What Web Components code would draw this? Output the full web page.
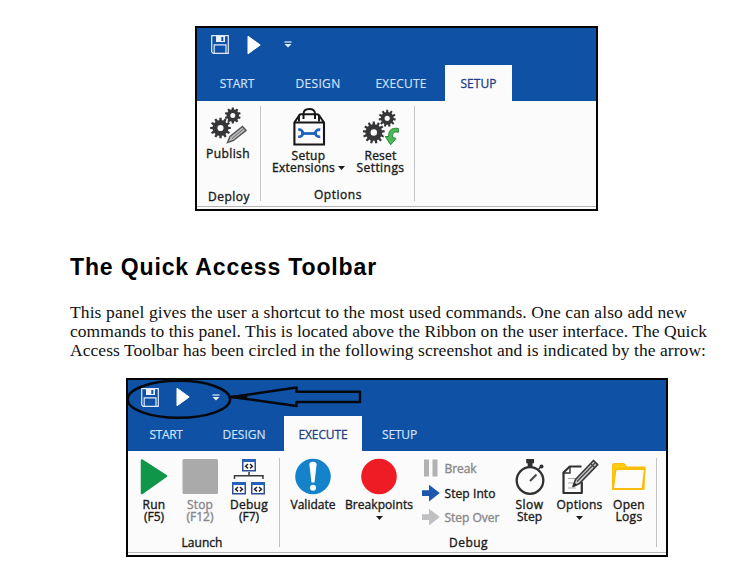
<!DOCTYPE html>
<html lang="en"><head><meta charset="utf-8"><title>The Quick Access Toolbar</title>
<style>
html,body{margin:0;background:#fff}
body{width:753px;height:570px;overflow:hidden}
</style></head><body>
<doc-page></doc-page>
<script>
function gear(cx,cy,r,ri,hole,n){
  let p='';
  const pt=(a,q)=>(cx+q*Math.cos(a)).toFixed(2)+' '+(cy+q*Math.sin(a)).toFixed(2);
  for(let i=0;i<n;i++){
    const a=i*2*Math.PI/n-Math.PI/2,s=Math.PI/n;
    p+=(i?'L':'M')+pt(a-s*.62,ri)+'L'+pt(a-s*.4,r)+'L'+pt(a+s*.4,r)+'L'+pt(a+s*.62,ri);
  }
  p+=`ZM${cx-hole} ${cy}a${hole} ${hole} 0 1 0 ${2*hole} 0a${hole} ${hole} 0 1 0 ${-2*hole} 0Z`;
  return `<path d="${p}" fill="#363639" fill-rule="evenodd"/>`;
}
const win=(x,y)=>`<rect x="${x+.75}" y="${y+.75}" width="12.5" height="11" fill="#fff" stroke="#2c4f94" stroke-width="1.5"/><path d="M${x} ${y+1.5}h14" stroke="#2462b8" stroke-width="3"/><path d="M${x+6} ${y+5}l-2.4 2.2 2.4 2.2M${x+8} ${y+5}l2.4 2.2-2.4 2.2" fill="none" stroke="#222" stroke-width="1.5"/>`;
const ICONS={
 save:[18,19,`<path d="M.7.7h16.6v17.6H2.2L.7 16.8Z" fill="none" stroke="#dfe9fa" stroke-width="1.2"/><path d="M5 1h9v6H5Z" fill="#e9f1fd"/><path d="M10.300 2h2v4h-2Z" fill="#0f52a5"/><path d="M3.200 18V9.800h11.800V18" fill="none" stroke="#dfe9fa" stroke-width="1.200"/>`],
 play:[14,20,`<path d="M1 1.200 13.200 10 1 18.800Z" fill="#fff" stroke="#fff" stroke-linejoin="round"/>`],
 more:[8,7,`<path d="M.5 1h7" stroke="#e6eefb" stroke-width="1.200"/><path d="M.5 3h7L4 6.500Z" fill="#e6eefb"/>`],
 publish:[40,40,gear(24.8,9.5,8,6.2,2.5,10)+gear(12.5,22,10.4,7.9,3.1,12)+`<path d="m19.500 36.500 2.500-6L34.500 20.500l3.600 3.900L25.500 34.500Z" fill="#bbb" stroke="#fbfbfb" stroke-width="3"/><path d="m19.500 36.500 2.500-6L34.500 20.500l3.600 3.900L25.500 34.500Z" fill="#b9b9bb" stroke="#555" stroke-width="1.400"/><path d="m24 32.500 12-10M19.500 36.500l2-1" stroke="#707074"/>`],
 bag:[40,40,`<path d="M10 15.500V10.500Q10 8.500 12 8.300H28Q30 8.500 30 10.500V15.500" fill="none" stroke="#171717" stroke-width="1.900"/><path d="M14.500 13V8Q14.500 3 20.300 3T26 8v5" fill="none" stroke="#171717" stroke-width="2"/><path d="M10.500 9 5.400 16.500V38.500H35V16.500L29.800 9" fill="none" stroke="#171717" stroke-width="2.100"/><path d="M5 16.500H35" stroke="#171717" stroke-width="2"/><path d="M12 27.500H28" stroke="#2163ba" stroke-width="2.800"/><path d="M9.200 23.800c6-1.200 6.500 7.600 0 6.900M31.200 23.800c-6.400-1.200-6.400 7.800 0 6.900" fill="none" stroke="#2163ba" stroke-width="2.700"/>`],
 reset:[40,40,gear(26.2,12.3,8.6,6.4,2.6,11)+gear(12.8,26.5,11,8.3,3.2,13)+`<path d="M37.300 22.400C29.500 21.500 27.500 25 27.700 30.500H24.300L29.700 38.800 35 32.500 31.700 31.400C31 27 33.400 25.200 37.300 26.300Z" fill="#3cae4c" stroke="#fbfbfb" stroke-width="2.500"/><path d="M37.300 22.400C29.500 21.500 27.500 25 27.700 30.500H24.300L29.700 38.800 35 32.500 31.700 31.400C31 27 33.400 25.200 37.300 26.300Z" fill="#4bb955" stroke="#278739"/>`],
 run:[40,40,`<path d="M8 4.500 32 20 8 37Z" fill="#109648" stroke="#109648" stroke-width="2.500" stroke-linejoin="round"/>`],
 stop:[40,40,`<rect x="2.500" y="3" width="35.500" height="35" rx="1.500" fill="#aaa"/>`],
 debug:[40,40,win(13,3)+win(3,26)+win(22,26)+`<path d="M20 16v4M5.500 23v-3.300h28.500V23" fill="none" stroke="#3a3a3a" stroke-width="1.500"/>`],
 validate:[40,40,`<circle cx="20" cy="20.500" r="17.800" fill="#1583cc"/><path d="M16.400 8.500Q16.500 5.800 20 5.800T23.600 8.500L21.500 26.500H18.500Z" fill="#fff"/><circle cx="20" cy="31.700" r="3" fill="#fff"/>`],
 breakpoints:[40,40,`<circle cx="20" cy="20.500" r="17.800" fill="#ee1c24"/>`],
 slow:[40,40,`<circle cx="20" cy="24.500" r="13.300" fill="none" stroke="#303032" stroke-width="2.300"/><path d="M16.200 3h7.800v4.200h-1.500V12h-4.800V7.200h-1.500Z" fill="#303032"/><path d="m28.500 13.300 3-3" stroke="#303032" stroke-width="1.500"/><circle cx="31.500" cy="10.500" r="2" fill="#303032"/><path d="m20 25 6.500-6.500" stroke="#444" stroke-width="2"/>`],
 edit:[40,40,`<path d="M21.500 10.500H9.800L3.500 16.500V37H21.800V26" fill="none" stroke="#303032" stroke-width="2.200" stroke-linejoin="round"/><path d="M3.500 17H10V10.500" fill="none" stroke="#303032" stroke-width="1.400"/><path d="M8 22.500h9M8 27h5M8 32h8" stroke="#aaa" stroke-width="1.200"/><path d="m13 30.500 2.500-7L33.500 4.500l4.200 4.100L19.500 27.500Z" fill="#c8c8ca" stroke="#3a3a3c" stroke-width="1.700" stroke-linejoin="round"/><path d="m17 25.500 18.500-19M30.500 7.500l4 4" stroke="#444" stroke-width="1.200"/><path d="m13 30.500 1.500-4 2.500 2.500Z" fill="#222"/>`],
 folder:[40,40,`<path d="M4 33V9.500Q4 8 5.500 8H14.500L17.500 11.500H35.500L34.500 33Z" fill="#fbfbfb" stroke="#f9bd0b" stroke-width="2" stroke-linejoin="round"/><path d="M4 33V9.500Q4 8 5.500 8H14.500L17.500 12.500 8 16Z" fill="#fbce14"/><path d="M4 33 6.500 14.500Q6.800 13 8.500 13H35.800L33.500 33Z" fill="#fdfcfb" stroke="#f9bd0b" stroke-width="1.800" stroke-linejoin="round"/>`],
 pause:[18,18,`<path d="M2 .5h5v17H2ZM10.500.5h5v17h-5Z" fill="#b2b2b4"/>`],
 into:[18,18,`<path d="M0 6.300H7V.8L17.800 9 7 17.500V12H0Z" fill="#1e58ae"/>`],
 over:[18,18,`<path d="M0 6.300H7V.8L17.800 9 7 17.500V12H0Z" fill="#c0c0c2"/>`],
 caret:[7,4,`<path d="M0 0h7L3.500 4Z" fill="#1c1c1c"/>`]
};
function define(name,html,setup){
  const t=document.createElement('template');t.innerHTML=html;
  customElements.define(name,class extends HTMLElement{
    constructor(){super();this.attachShadow({mode:'open'}).append(document.importNode(t.content,true));}
    connectedCallback(){if(setup)setup(this,this.shadowRoot);}
  });
}
const setWidth=el=>{el.style.width=el.getAttribute('w')+'px'};

define('ui-icon','<style>:host{display:block;flex:none}svg{display:block}</style><div></div>',(el,r)=>{
  const [w,h,s]=ICONS[el.getAttribute('name')];
  r.querySelector('div').innerHTML=`<svg width="${w}" height="${h}" viewBox="0 0 ${w} ${h}">${s}</svg>`;
});

/* One line of text, tracked so that it fills the given width. */
define('fit-text','<style>:host{display:block;white-space:nowrap;flex:none}span{display:inline-block}</style><span></span>',(el,r)=>{
  const s=r.querySelector('span'),txt=el.getAttribute('text'),w=+el.getAttribute('w');
  s.textContent=txt;s.style.letterSpacing='0';setWidth(el);
  s.style.letterSpacing=((w-s.getBoundingClientRect().width)/txt.length)+'px';
});

define('ribbon-tab',`<style>:host{display:flex;justify-content:center;box-sizing:border-box;padding-top:var(--tab-pad);color:#d5e3fa;flex:none;-webkit-text-stroke:.15px currentColor}
:host([active]){background:#fbfbfc;color:#243f86;-webkit-text-stroke:.3px #243f86}</style><slot></slot>`,setWidth);

define('ribbon-command',`<style>:host{display:flex;flex-direction:column;align-items:center;flex:none}
:host([disabled]){color:#89878b}
.l{display:flex;flex-direction:column;align-items:center;padding-top:var(--label-gap,3px)}</style>
<slot name="icon"></slot><div class="l"><slot></slot></div>`,setWidth);

define('ribbon-row',`<style>:host{display:flex;align-items:center;height:24.5px;gap:4.5px}
:host([disabled]){color:#89878b}::slotted(fit-text){padding-top:2px}</style><slot></slot>`);

define('ribbon-group',`<style>:host{display:flex;flex-direction:column;box-sizing:border-box;height:100%;flex:none;padding-top:5px;position:relative}
.row{display:flex;flex:1;min-height:0;padding-left:var(--lead,0)}
.title{display:flex;justify-content:center;height:var(--title-h,18px)}
:host::after{content:"";position:absolute;right:0;top:var(--sep-top,5px);bottom:8px;width:1px;background:#c3c3c6}</style>
<div class="row"><slot></slot></div><div class="title"><slot name="title"></slot></div>`,setWidth);

define('ribbon-window',`<style>
:host{display:flex;flex-direction:column;box-sizing:border-box;border:2px solid #050505;background:#0f52a5;position:relative;
 font:12px/12px "Open Sans","Noto Sans",sans-serif;color:#1b1b1b}
.qat{display:flex;align-items:center;flex:none;height:var(--qat-h);padding-left:var(--qat-pad);padding-bottom:var(--qat-lift);gap:var(--qat-gap);box-sizing:border-box}
.tabs{display:flex;flex:none;height:var(--tabs-h)}
.ribbon{display:flex;flex:1;min-height:0;background:#fbfbfc;box-shadow:inset 0 -2px #fbfbfc,inset 0 -3px #b5b5b8;-webkit-text-stroke:.38px currentColor}
</style>
<div class="qat"><slot name="qat"></slot></div><div class="tabs"><slot name="tabs"></slot></div><div class="ribbon"><slot></slot></div><slot name="overlay"></slot>`);

define('doc-page',`<style>
:host{display:flex;flex-direction:column;width:753px;height:570px;box-sizing:border-box;padding-top:26px;background:#fff;color:#000}
#a{width:403px;height:185px;margin-left:195px;--qat-h:37px;--qat-pad:14px;--qat-gap:18px;--qat-lift:4px;--tabs-h:36px;--tab-pad:13px}
#b{width:542px;height:179px;margin-left:126px;margin-top:18px;--qat-h:36px;--qat-pad:13px;--qat-gap:17px;--qat-lift:2px;--tabs-h:35px;--tab-pad:13px}
h2{margin:42px 0 0 70px;font:bold 23px/28px "Liberation Sans",Arial,sans-serif}
.p{margin:22px 0 0 70px;font:17.5px/19px "Palatino Linotype","Liberation Serif",serif;color:#111}
.more{margin-left:5px}
.caret{padding-top:5px}
.flex{display:flex;align-items:center;gap:3px}
.rows{display:flex;flex-direction:column;width:82px;margin-left:6px;flex:none}
svg{position:absolute;left:-2px;top:-2px}
</style>
<ribbon-window id="a">
 <ui-icon slot="qat" name="save"></ui-icon><ui-icon slot="qat" name="play"></ui-icon><ui-icon slot="qat" name="more" class="more"></ui-icon>
 <ribbon-tab slot="tabs" w="80"><fit-text w="34.500" text="START"></fit-text></ribbon-tab>
 <ribbon-tab slot="tabs" w="82"><fit-text w="45" text="DESIGN"></fit-text></ribbon-tab>
 <ribbon-tab slot="tabs" w="84"><fit-text w="51" text="EXECUTE"></fit-text></ribbon-tab>
 <ribbon-tab slot="tabs" w="67" style="margin-left:2px" active><fit-text w="36" text="SETUP"></fit-text></ribbon-tab>
 <ribbon-group w="64">
  <ribbon-command w="62" style="--label-gap:2px"><ui-icon slot="icon" name="publish"></ui-icon><fit-text w="44" text="Publish"></fit-text></ribbon-command>
  <fit-text slot="title" w="42" text="Deploy"></fit-text>
 </ribbon-group>
 <ribbon-group w="154" style="--lead:9px;--title-h:20px">
  <ribbon-command w="77" style="--label-gap:4px"><ui-icon slot="icon" name="bag"></ui-icon><fit-text w="34" text="Setup"></fit-text><div class="flex"><fit-text w="63" text="Extensions"></fit-text><ui-icon name="caret"></ui-icon></div></ribbon-command>
  <ribbon-command w="67" style="--label-gap:4px"><ui-icon slot="icon" name="reset"></ui-icon><fit-text w="32" text="Reset"></fit-text><fit-text w="48" text="Settings"></fit-text></ribbon-command>
  <fit-text slot="title" w="48" text="Options"></fit-text>
 </ribbon-group>
</ribbon-window>
<h2><fit-text w="307" text="The Quick Access Toolbar"></fit-text></h2>
<div class="p">
 <fit-text w="617" text="This panel gives the user a shortcut to the most used commands. One can also add new"></fit-text>
 <fit-text w="637" text="commands to this panel. This is located above the Ribbon on the user interface. The Quick"></fit-text>
 <fit-text w="636" text="Access Toolbar has been circled in the following screenshot and is indicated by the arrow:"></fit-text>
</div>
<ribbon-window id="b" style="--sep-top:7px">
 <ui-icon slot="qat" name="save"></ui-icon><ui-icon slot="qat" name="play"></ui-icon><ui-icon slot="qat" name="more" class="more"></ui-icon>
 <ribbon-tab slot="tabs" w="76"><fit-text w="33" text="START"></fit-text></ribbon-tab>
 <ribbon-tab slot="tabs" w="80"><fit-text w="43" text="DESIGN"></fit-text></ribbon-tab>
 <ribbon-tab slot="tabs" w="78" active><fit-text w="49" text="EXECUTE"></fit-text></ribbon-tab>
 <ribbon-tab slot="tabs" w="75"><fit-text w="35" text="SETUP"></fit-text></ribbon-tab>
 <ribbon-group w="152" style="--lead:3px">
  <ribbon-command w="46"><ui-icon slot="icon" name="run"></ui-icon><fit-text w="23" text="Run"></fit-text><fit-text w="20" text="(F5)"></fit-text></ribbon-command>
  <ribbon-command w="46" disabled><ui-icon slot="icon" name="stop"></ui-icon><fit-text w="26" text="Stop"></fit-text><fit-text w="27" text="(F12)"></fit-text></ribbon-command>
  <ribbon-command w="52"><ui-icon slot="icon" name="debug"></ui-icon><fit-text w="38" text="Debug"></fit-text><fit-text w="20" text="(F7)"></fit-text></ribbon-command>
  <fit-text slot="title" w="41" text="Launch" style="margin-right:4px"></fit-text>
 </ribbon-group>
 <ribbon-group w="377" style="--lead:4px">
  <ribbon-command w="58"><ui-icon slot="icon" name="validate"></ui-icon><fit-text w="45" text="Validate"></fit-text></ribbon-command>
  <ribbon-command w="74"><ui-icon slot="icon" name="breakpoints"></ui-icon><fit-text w="68" text="Breakpoints"></fit-text><ui-icon name="caret" class="caret"></ui-icon></ribbon-command>
  <div class="rows">
   <ribbon-row disabled><ui-icon name="pause"></ui-icon><fit-text w="32" text="Break"></fit-text></ribbon-row>
   <ribbon-row><ui-icon name="into"></ui-icon><fit-text w="51" text="Step Into"></fit-text></ribbon-row>
   <ribbon-row disabled><ui-icon name="over"></ui-icon><fit-text w="55" text="Step Over"></fit-text></ribbon-row>
  </div>
  <ribbon-command w="51"><ui-icon slot="icon" name="slow"></ui-icon><fit-text w="28" text="Slow"></fit-text><fit-text w="25" text="Step"></fit-text></ribbon-command>
  <ribbon-command w="49"><ui-icon slot="icon" name="edit"></ui-icon><fit-text w="46" text="Options"></fit-text><ui-icon name="caret" class="caret"></ui-icon></ribbon-command>
  <ribbon-command w="50"><ui-icon slot="icon" name="folder"></ui-icon><fit-text w="32" text="Open"></fit-text><fit-text w="27" text="Logs"></fit-text></ribbon-command>
  <fit-text slot="title" w="39" text="Debug"></fit-text>
 </ribbon-group>
 <svg slot="overlay" width="250" height="45" viewBox="126 378 250 45" fill="none" stroke="#05080c" stroke-width="2.500" stroke-linejoin="round"><ellipse cx="178.800" cy="399.300" rx="51.300" ry="18.500"/><path d="M232 397 296.500 387.500V391.800H360V402H296.500V406Z"/><path d="M231 397 246 395.500v3Z" fill="#05080c"/></svg>
</ribbon-window>`);
</script>
</body></html>
